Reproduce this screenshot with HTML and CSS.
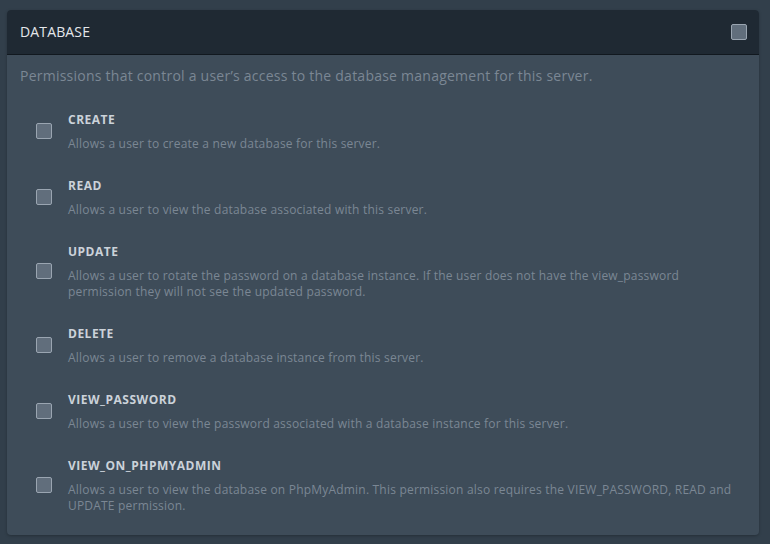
FILE: index.html
```html
<!DOCTYPE html>
<html lang="en">
<head>
<meta charset="utf-8">
<title>Database permissions</title>
<link rel="stylesheet" href="styles.css">
</head>
<body>
<div class="page">
  <section class="card">
    <header class="card-header">
      <h2 class="card-title">DATABASE</h2>
      <input type="checkbox" class="check" aria-label="Select all database permissions">
    </header>
    <div class="card-body">
      <p class="lead">Permissions that control a user’s access to the database management for this server.</p>
      <div class="perm-list">
        <label class="perm">
          <input type="checkbox" class="check">
          <div class="perm-text">
            <span class="perm-name">CREATE</span>
            <p class="perm-desc">Allows a user to create a new database for this server.</p>
          </div>
        </label>
        <label class="perm">
          <input type="checkbox" class="check">
          <div class="perm-text">
            <span class="perm-name">READ</span>
            <p class="perm-desc">Allows a user to view the database associated with this server.</p>
          </div>
        </label>
        <label class="perm">
          <input type="checkbox" class="check">
          <div class="perm-text">
            <span class="perm-name">UPDATE</span>
            <p class="perm-desc">Allows a user to rotate the password on a database instance. If the user does not have the view_password permission they will not see the updated password.</p>
          </div>
        </label>
        <label class="perm">
          <input type="checkbox" class="check">
          <div class="perm-text">
            <span class="perm-name">DELETE</span>
            <p class="perm-desc">Allows a user to remove a database instance from this server.</p>
          </div>
        </label>
        <label class="perm">
          <input type="checkbox" class="check">
          <div class="perm-text">
            <span class="perm-name">VIEW_PASSWORD</span>
            <p class="perm-desc">Allows a user to view the password associated with a database instance for this server.</p>
          </div>
        </label>
        <label class="perm">
          <input type="checkbox" class="check">
          <div class="perm-text">
            <span class="perm-name">VIEW_ON_PHPMYADMIN</span>
            <p class="perm-desc">Allows a user to view the database on PhpMyAdmin. This permission also requires the VIEW_PASSWORD, READ and UPDATE permission.</p>
          </div>
        </label>
      </div>
    </div>
  </section>
</div>
</body>
</html>
```

FILE: styles.css
```css
* { box-sizing: border-box; }

html, body {
  margin: 0;
  background: #323f4b;
  font-family: "Open Sans", "Noto Sans", sans-serif;
}

.page {
  padding: 10px 11px 10px 7px;
}

.card {
  background: #3e4c59;
  border-radius: 4px;
  overflow: hidden;
  box-shadow: 0 1px 3px rgba(0, 0, 0, 0.25);
}

.card-header {
  display: flex;
  align-items: center;
  justify-content: space-between;
  background: #1f2933;
  padding: 12px 12px 12px 13px;
  border-bottom: 1px solid #11181f;
  height: 45px;
}

.card-title {
  margin: 0;
  font-size: 14px;
  line-height: 20px;
  font-weight: 400;
  letter-spacing: 0.15px;
  color: #e4e7eb;
}

.check {
  appearance: none;
  -webkit-appearance: none;
  margin: 0;
  width: 16px;
  height: 16px;
  flex: none;
  background: #616e7c;
  border: 1px solid #9aa5b1;
  border-radius: 2px;
}

.card-body {
  padding: 11px 12px 9px 13px;
}

.lead {
  margin: 0;
  font-size: 14px;
  line-height: 20px;
  letter-spacing: 0.24px;
  color: #7b8794;
}

.perm-list {
  margin-top: 12px;
  display: flex;
  flex-direction: column;
}

.perm {
  display: flex;
  align-items: center;
  gap: 16px;
  padding: 12px 9px 12px 16px;
}

.perm-text {
  flex: 1;
}

.perm-name {
  display: block;
  font-size: 12px;
  line-height: 20px;
  font-weight: 700;
  letter-spacing: 0.5px;
  color: #cbd2d9;
}

.perm-desc {
  margin: 6px 0 0;
  font-size: 12px;
  line-height: 16px;
  letter-spacing: 0.2px;
  color: #7b8794;
}
```
